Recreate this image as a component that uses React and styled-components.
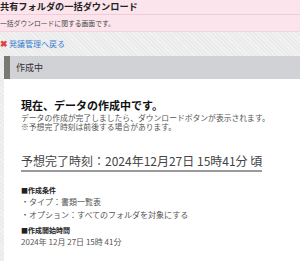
import React from "react";
import styled, { createGlobalStyle } from "styled-components";

const Global = createGlobalStyle`
  html, body { margin: 0; padding: 0; }
  body {
    font-family: "Noto Sans CJK JP", "Noto Sans", sans-serif;
    background-color: #efefef;
    background-image: repeating-linear-gradient(45deg, #f3f3f3 0 1px, #ebebeb 1px 3px);
    overflow: hidden;
  }
`;

const Page = styled.div`
  width: 300px;
  height: 261px;
  overflow: hidden;
  display: flex;
  flex-direction: column;
`;

const TitleBar = styled.div`
  background: #fce4ec;
  height: 14px;
  border-bottom: 1px solid #efcdd6;
  font-size: 9.2px;
  line-height: 13px;
  font-weight: 700;
  color: #222;
  white-space: nowrap;
`;

const SubBar = styled.div`
  background: #fce4ec;
  height: 16px;
  border-bottom: 1px solid #f2d6dd;
  font-size: 6.8px;
  line-height: 17px;
  color: #444;
  white-space: nowrap;
`;

const Nav = styled.div`
  height: 22px;
  padding-bottom: 2px;
  display: flex;
  align-items: center;
  gap: 2px;
  font-size: 8px;
`;

const Cross = styled.span`
  color: #e0403a;
  font-weight: 700;
  font-size: 9px;
  width: 7px;
  display: inline-flex;
  justify-content: center;
`;

const BackLink = styled.a`
  color: #3b7fd0;
  text-decoration: none;
`;

const Panel = styled.section`
  margin-left: 4px;
  flex: 1;
  background: #fff;
  display: flex;
  flex-direction: column;
`;

const PanelHeader = styled.div`
  height: 23px;
  background: #d1d2d6;
  border-left: 6px solid #7a7872;
  padding-left: 6px;
  font-size: 9px;
  line-height: 23px;
  color: #333;
`;

const Body = styled.div`
  padding: 18px 0 0 17px;
`;

const Heading = styled.h2`
  margin: 0;
  font-size: 11px;
  line-height: 16px;
  font-weight: 700;
  color: #111;
  white-space: nowrap;
`;

const Notes = styled.p`
  margin: 0;
  font-size: 7.8px;
  line-height: 9px;
  color: #555;
  white-space: nowrap;
`;

const Eta = styled.div`
  display: inline-block;
  margin-top: 22px;
  font-size: 12px;
  line-height: 16px;
  color: #444;
  padding-bottom: 1px;
  border-bottom: 2px solid #9a9a9a;
  white-space: nowrap;
`;

const SectionTitle = styled.div`
  margin-top: ${(p) => p.$top}px;
  font-size: 7px;
  line-height: 10px;
  font-weight: 700;
  color: #222;
`;

const Item = styled.div`
  font-size: 8px;
  line-height: 13px;
  color: #555;
  white-space: nowrap;
`;

export default function App() {
  return (
    <>
      <Global />
      <Page>
        <TitleBar>共有フォルダの一括ダウンロード</TitleBar>
        <SubBar>一括ダウンロードに関する画面です。</SubBar>
        <Nav>
          <Cross>✖</Cross>
          <BackLink href="#">発議管理へ戻る</BackLink>
        </Nav>
        <Panel>
          <PanelHeader>作成中</PanelHeader>
          <Body>
            <Heading>現在、データの作成中です。</Heading>
            <Notes>
              データの作成が完了しましたら、ダウンロードボタンが表示されます。
              <br />
              ※予想完了時刻は前後する場合があります。
            </Notes>
            <Eta>予想完了時刻：2024年12月27日 15時41分 頃</Eta>
            <SectionTitle $top={13}>■作成条件</SectionTitle>
            <Item>・タイプ：書類一覧表</Item>
            <Item>・オプション：すべてのフォルダを対象にする</Item>
            <SectionTitle $top={4}>■作成開始時間</SectionTitle>
            <Item>2024年 12月 27日 15時 41分</Item>
          </Body>
        </Panel>
      </Page>
    </>
  );
}
